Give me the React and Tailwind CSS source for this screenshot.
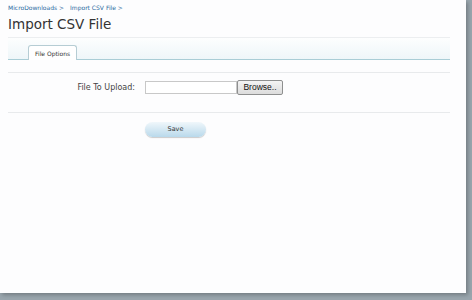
export default function App() {
  return (
    <div className="w-[472px] h-[300px] bg-[#9aa6ae] overflow-hidden" style={{ fontFamily: '"DejaVu Sans", Verdana, sans-serif' }}>
      <div className="w-[466px] h-[293px] bg-[#fdfdfe] shadow-[2px_2px_4px_rgba(0,0,0,0.25)] px-2 pt-[3px]">
        {/* breadcrumb */}
        <div className="text-[6px] leading-[9px] text-[#2a6aa0] flex gap-[6px]">
          <span>MicroDownloads &gt;</span>
          <span>Import CSV File &gt;</span>
        </div>
        <h1 className="text-[13.5px] leading-[20px] text-[#333] mt-[2px]">Import CSV File</h1>
        <div className="mt-[3px] border-t border-[#eceef0] mr-2"></div>

        {/* tabs */}
        <div className="h-[22px] mr-2 bg-gradient-to-b from-[#fdfefe] to-[#eef6f9] border-b border-[#a9cdd6] flex items-end pl-5">
          <div className="h-[15px] px-[6px] bg-white border border-b-0 border-[#b6cdd4] rounded-t-[3px] text-[6px] text-[#333] flex items-center -mb-px">
            File Options
          </div>
        </div>

        <div className="mt-[12px] border-t border-[#e8eaec] mr-2"></div>

        {/* form row */}
        <div className="flex items-center mt-[7px] h-[15px]">
          <div className="w-[137px] text-right text-[8px] text-[#444] pr-[10px]">File To Upload:</div>
          <div className="w-[92px] h-[13px] border border-[#c8c8c8] bg-white"></div>
          <button className="w-[46px] h-[15px] border border-[#8e8f8f] rounded-[2px] bg-gradient-to-b from-[#f4f4f4] to-[#dcdcdc] text-[8.5px] text-[#111] leading-none" style={{ fontFamily: '"Liberation Sans", Arial, sans-serif' }}>
            Browse..
          </button>
        </div>

        <div className="mt-[17px] border-t border-[#e8eaec] mr-2"></div>

        <div className="flex pl-[137px] mt-[9px]">
          <button className="w-[61px] h-[15px] rounded-full bg-gradient-to-b from-[#f0f7fb] to-[#b9d9eb] shadow-[0_1px_1px_rgba(0,0,0,0.2)] text-[6.5px] leading-none text-[#333]">
            Save
          </button>
        </div>
      </div>
    </div>
  );
}
